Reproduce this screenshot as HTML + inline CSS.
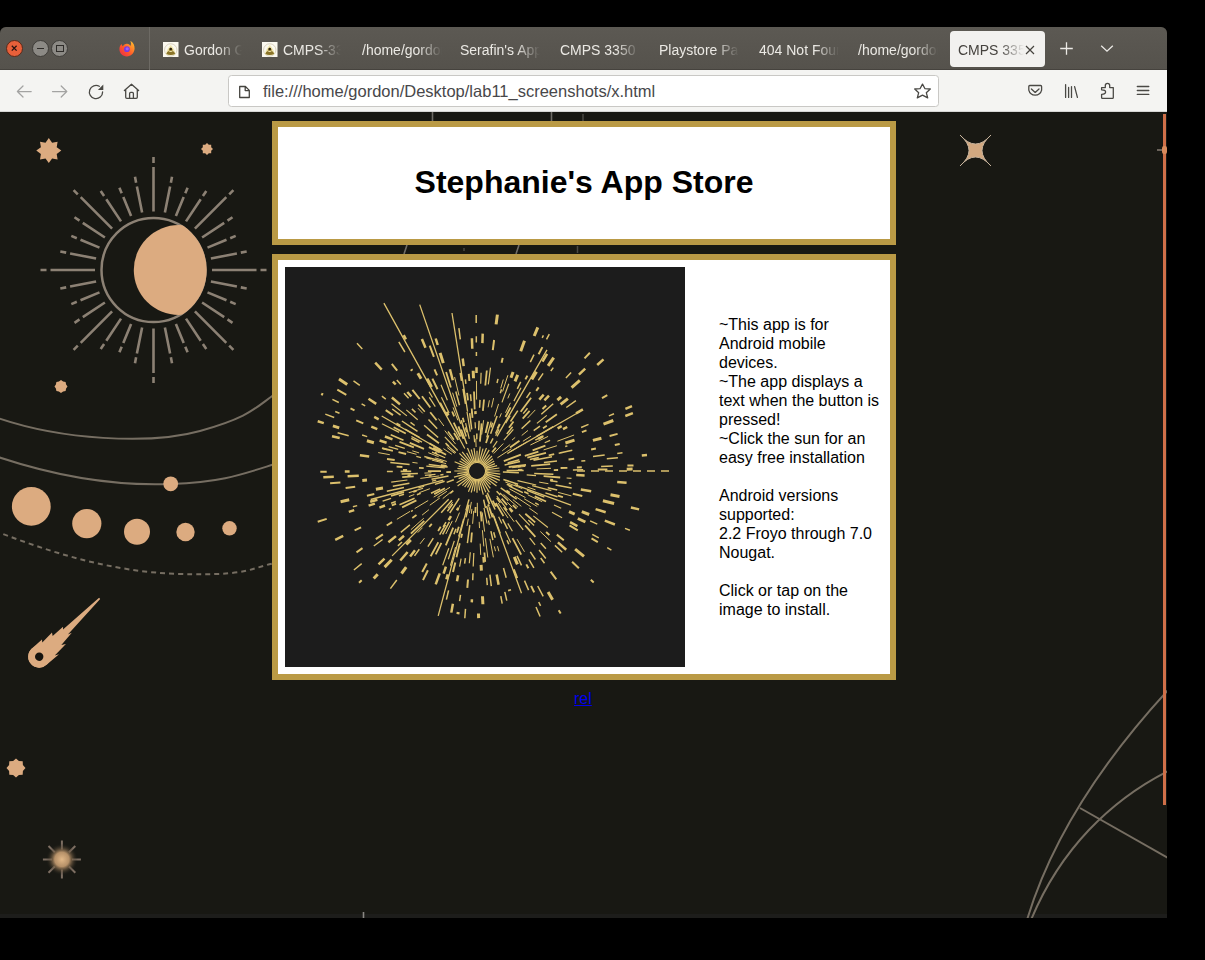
<!DOCTYPE html>
<html><head><meta charset="utf-8">
<style>
*{margin:0;padding:0;box-sizing:border-box}
html,body{width:1205px;height:960px;overflow:hidden;background:#000;font-family:"Liberation Sans",sans-serif}
#win{position:absolute;left:0;top:27px;width:1167px;height:891px;background:#181813;border-radius:6px 6px 0 0;overflow:hidden}
#tabs{position:absolute;left:0;top:0;width:1167px;height:43px;background:linear-gradient(#5c5953,#55524c);box-shadow:inset 0 -1px 0 #46433e}
#tb{position:absolute;left:0;top:43px;width:1167px;height:42px;background:#f4f4f2;border-bottom:1px solid #d6d6d4}
.wbtn{position:absolute;top:13px;width:17px;height:17px;border-radius:50%;border:1.2px solid}
.fav{position:absolute;top:14.7px;width:15.5px;height:15.5px;overflow:hidden}
.fav svg{display:block;width:15.5px;height:15.5px}
.tt{position:absolute;top:15px;height:19px;width:80px;font-size:14px;line-height:17px;color:#ebe9e4;white-space:nowrap;overflow:hidden;-webkit-mask-image:linear-gradient(90deg,#000 0,#000 calc(100% - 24px),transparent 100%)}
#atab{position:absolute;left:950px;top:4px;width:95px;height:36px;background:#f2f1ef;border-radius:4px}
.ic{position:absolute}
#url{position:absolute;left:228px;top:5px;width:711px;height:32px;background:#fff;border:1px solid #c9c8c5;border-radius:3.5px}
#urltxt{position:absolute;left:34px;top:6px;font-size:16.5px;line-height:19px;color:#48474a;white-space:nowrap}
#page{position:absolute;left:0;top:85px;width:1167px;height:806px;background:#181813;overflow:hidden}
.box{position:absolute;background:#fff;border:6px solid #ba9a45}
#hdr{left:272px;top:9px;width:624px;height:124px}
#hdr h1{position:absolute;left:0;right:0;top:37px;text-align:center;font-size:32px;font-weight:bold;line-height:37px;color:#000}
#main{left:272px;top:142px;width:624px;height:426px}
#img{position:absolute;left:7px;top:7px;width:400px;height:400px;background:#1c1c1c}
#txt{position:absolute;left:441px;top:55px;width:165px;font-size:16px;line-height:19px;color:#000}
#rel{position:absolute;left:574px;top:577px;font-size:16px;color:#0000ee;text-decoration:underline;line-height:19px}
</style></head><body>
<div id="win">
  <div id="tabs">
    <div class="wbtn" style="left:6px;background:#e8603a;border-color:#5a2a1a"><svg width="17" height="17" viewBox="0 0 17 17" style="position:absolute;left:-1px;top:-1px"><path d="M5.8 5.8L10.6 10.6M10.6 5.8L5.8 10.6" stroke="#2a1410" stroke-width="1.3"/></svg></div>
    <div class="wbtn" style="left:31.5px;background:#8c8a85;border-color:#3e3c38"><div style="position:absolute;left:4px;top:7px;width:7px;height:1.3px;background:#2e2c29"></div></div>
    <div class="wbtn" style="left:51px;background:#8c8a85;border-color:#3e3c38"><div style="position:absolute;left:3.5px;top:4px;width:8px;height:7px;border:1.2px solid #2e2c29"></div></div>
    <svg style="position:absolute;left:118px;top:12px" width="18" height="18" viewBox="118 39 18 18">
      <defs><linearGradient id="ffg" x1="0" y1="1" x2="1" y2="0"><stop offset="0" stop-color="#e8264a"/><stop offset="0.45" stop-color="#ff5a2a"/><stop offset="0.8" stop-color="#ffa02a"/><stop offset="1" stop-color="#ffe040"/></linearGradient></defs>
      <path d="M130.2 40.8C133.5 42.6 134.8 45.8 134.6 48.8C134.3 53.3 130.8 56.4 126.8 56.4C122.6 56.4 119.4 53.1 119.4 49C119.4 46.7 120.4 44.9 121.6 43.9C121.8 45 122.3 45.8 122.9 46.2C123.6 44.6 125.2 43.6 127 43.7C128.8 43.8 130.1 45 130.4 46.1C131.2 44.6 131.2 42.4 130.2 40.8Z" fill="url(#ffg)"/>
      <circle cx="126.9" cy="49.2" r="2.9" fill="#7a3ae0"/><circle cx="127.2" cy="48.8" r="1.6" fill="#a060f5"/>
    </svg>
    <div style="position:absolute;left:149px;top:0;width:1px;height:43px;background:#6d6a64"></div>
    <div class="fav" style="left:163px"><svg width="16" height="16" viewBox="0 0 16 16"><rect width="16" height="16" fill="#fbf9f0"/><circle cx="8" cy="8.2" r="6.4" fill="none" stroke="#d8d2bd" stroke-width="1"/><path d="M3.2 12.6Q3 8.4 8 2.8Q13 8.4 12.8 12.6Q8 14.6 3.2 12.6Z" fill="#f1e8b4"/><path d="M3.4 12.4Q4.2 9.6 5.8 9.2Q8 11.6 10.2 9.2Q11.8 9.6 12.6 12.4Q8 14.4 3.4 12.4Z" fill="#8a7428"/><path d="M5.6 8.4Q8 2.8 10.4 8.4Q8 10.4 5.6 8.4Z" fill="#a89040"/><circle cx="8" cy="7.2" r="1.3" fill="#2e2410"/></svg></div>
    <div class="tt" style="left:184px;width:58px">Gordon Gordon</div>
    <div class="fav" style="left:262px"><svg width="16" height="16" viewBox="0 0 16 16"><rect width="16" height="16" fill="#fbf9f0"/><circle cx="8" cy="8.2" r="6.4" fill="none" stroke="#d8d2bd" stroke-width="1"/><path d="M3.2 12.6Q3 8.4 8 2.8Q13 8.4 12.8 12.6Q8 14.6 3.2 12.6Z" fill="#f1e8b4"/><path d="M3.4 12.4Q4.2 9.6 5.8 9.2Q8 11.6 10.2 9.2Q11.8 9.6 12.6 12.4Q8 14.4 3.4 12.4Z" fill="#8a7428"/><path d="M5.6 8.4Q8 2.8 10.4 8.4Q8 10.4 5.6 8.4Z" fill="#a89040"/><circle cx="8" cy="7.2" r="1.3" fill="#2e2410"/></svg></div>
    <div class="tt" style="left:283px;width:58px">CMPS-3350</div>
    <div class="tt" style="left:362px">/home/gordon</div>
    <div class="tt" style="left:460px">Serafin's App</div>
    <div class="tt" style="left:560px">CMPS 3350 Lab</div>
    <div class="tt" style="left:659px">Playstore Page</div>
    <div class="tt" style="left:759px">404 Not Found</div>
    <div class="tt" style="left:858px">/home/gordon</div>
    <div id="atab"><div class="tt" style="left:8px;top:10.5px;width:66px;color:#45423e">CMPS 3350</div>
      <svg style="position:absolute;left:75px;top:14px" width="10" height="10" viewBox="0 0 10 10"><path d="M1 1L9 9M9 1L1 9" stroke="#45423e" stroke-width="1.15"/></svg></div>
    <svg style="position:absolute;left:1059px;top:14px" width="15" height="15" viewBox="0 0 15 15"><path d="M7.5 1.2V13.8M1.2 7.5H13.8" stroke="#ebe9e5" stroke-width="1.3"/></svg>
    <svg style="position:absolute;left:1100px;top:17px" width="14" height="10" viewBox="0 0 14 10"><path d="M1.2 1.8L7 7.2L12.8 1.8" stroke="#ebe9e5" stroke-width="1.35" fill="none"/></svg>
  </div>
  <div id="tb">
    <div id="url">
      <svg style="position:absolute;left:9px;top:9px" width="13" height="14" viewBox="0 0 13 14"><path d="M1.7 1.5H7.4L11.3 5.4V12.5H1.7Z M7.2 1.5V5.6H11.3" stroke="#45443f" stroke-width="1.3" fill="none" stroke-linejoin="round"/></svg>
      <div id="urltxt">file:///home/gordon/Desktop/lab11_screenshots/x.html</div>
    </div>
    <svg style="position:absolute;left:0;top:0" width="1167" height="42" viewBox="0 70 1167 42">
      <g fill="none" stroke="#a3a3a2" stroke-width="1.25" stroke-linecap="round" stroke-linejoin="round">
        <path d="M31.2 91.5H17.4M23 86L17.4 91.5L23 97"/>
        <path d="M52.5 91.5H66.8M61.2 86L66.8 91.5L61.2 97"/>
      </g>
      <g fill="none" stroke="#4a4945" stroke-width="1.3" stroke-linecap="round" stroke-linejoin="round">
        <path d="M102.6 92A6.6 6.6 0 1 1 99.3 86.3"/>
        <path d="M124.4 90.6L131.5 84.2L138.6 90.6M125.7 89.4V97.3Q125.7 98.4 126.8 98.4H136.2Q137.3 98.4 137.3 97.3V89.4M129.6 98.4V93.5Q129.6 92.4 130.7 92.4H132.3Q133.4 92.4 133.4 93.5V98.4"/>
        <path d="M922.5 84.1L925.0 88.7L930.3 89.0L926.3 92.7L927.7 97.9L922.5 95.1L917.3 97.9L918.7 92.7L914.7 89.0L920.0 88.7Z" stroke-linejoin="round"/>
        <path d="M1029.8 85.5H1040.6Q1041.6 85.5 1041.6 86.5V90.2A6.6 6.6 0 0 1 1028.8 90.2V86.5Q1028.8 85.5 1029.8 85.5Z"/>
        <path d="M1031.4 88.9L1035.2 92.4L1039 88.9"/>
        <path d="M1065.6 84.6V97.4M1068.6 87.4V97.4M1071.5 86.6V97.4M1074.6 86.6L1077.4 97.4"/>
        <path d="M1101.6 87.6H1105.3V85.6A2.2 2.2 0 0 1 1109.7 85.6V87.6H1113.3V97.4Q1113.3 98.3 1112.4 98.3H1102.5Q1101.6 98.3 1101.6 97.4V94.3Q1105.7 94.2 1105.6 92Q1105.7 89.9 1101.6 89.8Z"/>
        <path d="M1137.3 86.5H1148.8M1137.3 90.5H1148.8M1137.3 94.4H1148.8"/>
      </g>
      <path d="M97.9 89.9H103.3V84.5Z" fill="#4a4945"/>
    </svg>
  </div>
  <div id="page">
<svg id="bg" width="1167" height="806" viewBox="0 112 1167 806" style="position:absolute;left:0;top:0">
<rect x="0" y="914" width="1167" height="4" fill="#1d1d1b"/>
<path d="M260.5 270.0L266.5 270.0M212.0 270.0L256.5 270.0M240.8 287.4L246.7 288.5M210.9 281.4L236.9 286.6M230.2 301.8L235.7 304.1M207.5 292.4L226.5 300.2M227.5 319.4L232.5 322.8M202.1 302.5L224.2 317.2M229.2 345.7L233.4 349.9M194.9 311.4L226.3 342.8M202.9 344.0L206.3 349.0M186.0 318.6L200.7 340.7M185.3 346.7L187.6 352.2M175.9 324.0L183.7 343.0M170.9 357.3L172.0 363.2M164.9 327.4L170.1 353.4M153.5 377.0L153.5 383.0M153.5 328.5L153.5 373.0M136.1 357.3L135.0 363.2M142.1 327.4L136.9 353.4M121.7 346.7L119.4 352.2M131.1 324.0L123.3 343.0M104.1 344.0L100.7 349.0M121.0 318.6L106.3 340.7M77.8 345.7L73.6 349.9M112.1 311.4L80.7 342.8M79.5 319.4L74.5 322.8M104.9 302.5L82.8 317.2M76.8 301.8L71.3 304.1M99.5 292.4L80.5 300.2M66.2 287.4L60.3 288.5M96.1 281.4L70.1 286.6M46.5 270.0L40.5 270.0M95.0 270.0L50.5 270.0M66.2 252.6L60.3 251.5M96.1 258.6L70.1 253.4M76.8 238.2L71.3 235.9M99.5 247.6L80.5 239.8M79.5 220.6L74.5 217.2M104.9 237.5L82.8 222.8M77.8 194.3L73.6 190.1M112.1 228.6L80.7 197.2M104.1 196.0L100.7 191.0M121.0 221.4L106.3 199.3M121.7 193.3L119.4 187.8M131.1 216.0L123.3 197.0M136.1 182.7L135.0 176.8M142.1 212.6L136.9 186.6M153.5 163.0L153.5 157.0M153.5 211.5L153.5 167.0M170.9 182.7L172.0 176.8M164.9 212.6L170.1 186.6M185.3 193.3L187.6 187.8M175.9 216.0L183.7 197.0M202.9 196.0L206.3 191.0M186.0 221.4L200.7 199.3M229.2 194.3L233.4 190.1M194.9 228.6L226.3 197.2M227.5 220.6L232.5 217.2M202.1 237.5L224.2 222.8M230.2 238.2L235.7 235.9M207.5 247.6L226.5 239.8M240.8 252.6L246.7 251.5M210.9 258.6L236.9 253.4" stroke="#8c8174" stroke-width="2.6" stroke-linecap="butt"/>
<circle cx="153.5" cy="270" r="52" fill="none" stroke="#8c8174" stroke-width="2.5"/>
<defs><clipPath id="mc"><circle cx="153.5" cy="270" r="53.2"/></clipPath></defs>
<circle cx="178.8" cy="270" r="45" fill="#dcab80" clip-path="url(#mc)"/>
<polygon points="48.8,138.1 52.1,142.7 57.6,141.8 56.7,147.3 61.3,150.6 56.7,153.9 57.6,159.4 52.1,158.5 48.8,163.1 45.5,158.5 40.0,159.4 40.9,153.9 36.3,150.6 40.9,147.3 40.0,141.8 45.5,142.7" fill="#dcab80"/>
<polygon points="207.0,143.0 208.8,144.8 211.2,144.8 211.2,147.2 213.0,149.0 211.2,150.8 211.2,153.2 208.8,153.2 207.0,155.0 205.2,153.2 202.8,153.2 202.8,150.8 201.0,149.0 202.8,147.2 202.8,144.8 205.2,144.8" fill="#dcab80"/>
<polygon points="61.0,380.0 63.1,381.4 65.6,381.9 66.1,384.4 67.5,386.5 66.1,388.6 65.6,391.1 63.1,391.6 61.0,393.0 58.9,391.6 56.4,391.1 55.9,388.6 54.5,386.5 55.9,384.4 56.4,381.9 58.9,381.4" fill="#dcab80"/>
<polygon points="16.0,758.5 18.9,761.1 22.7,761.3 22.9,765.1 25.5,768.0 22.9,770.9 22.7,774.7 18.9,774.9 16.0,777.5 13.1,774.9 9.3,774.7 9.1,770.9 6.5,768.0 9.1,765.1 9.3,761.3 13.1,761.1" fill="#dcab80"/>
<path d="M-5 417 C60 440 150 445 200 431 S255 408 275 394" fill="none" stroke="#766e62" stroke-width="2"/>
<path d="M-5 456 C60 478 120 486 171 484 S240 475 275 464" fill="none" stroke="#766e62" stroke-width="2"/>
<path d="M-5 531 C50 552 110 572 180 574 S250 568 275 563" fill="none" stroke="#766e62" stroke-width="2" stroke-dasharray="5 4"/>
<circle cx="31.3" cy="506.4" r="19.4" fill="#dcab80"/>
<circle cx="86.8" cy="523.6" r="14.6" fill="#dcab80"/>
<circle cx="137" cy="531.7" r="13" fill="#dcab80"/>
<circle cx="185.5" cy="532" r="9.2" fill="#dcab80"/>
<circle cx="229.5" cy="528.3" r="7.2" fill="#dcab80"/>
<circle cx="170.7" cy="483.8" r="7.4" fill="#dcab80"/>
<g transform="translate(39.2 656.7) rotate(-44)"><path d="M0 -11 L14 -10.5 L12 -8 L26 -8.5 L24 -5.5 L38 -5 L36 -3 L84 -0.8 L84 0.8 L36 4 L40 5.5 L24 7 L28 9.5 L12 10 L16 12 L0 11 A11 11 0 0 1 0 -11Z" fill="#dcab80"/><circle cx="0" cy="0" r="11" fill="#dcab80"/><circle cx="0" cy="0" r="4.2" fill="#16140f"/></g>
<defs><radialGradient id="gl"><stop offset="0" stop-color="#e2b888"/><stop offset="0.45" stop-color="#b59068"/><stop offset="1" stop-color="#1a1914" stop-opacity="0"/></radialGradient></defs>
<path d="M71.9 859.4L80.9 859.4M69.0 866.5L75.3 872.8M61.9 869.4L61.9 878.4M54.8 866.5L48.5 872.8M51.9 859.4L42.9 859.4M54.8 852.3L48.5 846.0M61.9 849.4L61.9 840.4M69.0 852.3L75.3 846.0" stroke="#7d6e62" stroke-width="2"/>
<circle cx="61.9" cy="859.4" r="16" fill="url(#gl)"/>
<path d="M960 135 Q975.5 153 991 135 Q973 150.5 991 166 Q975.5 148 960 166 Q978 150.5 960 135Z" fill="#d2a880" stroke="#c9b59e" stroke-width="1"/>
<path d="M1027 920 C1045 860 1085 780 1170 688" fill="none" stroke="#766e62" stroke-width="2"/>
<path d="M1031 920 C1060 850 1110 800 1170 770" fill="none" stroke="#766e62" stroke-width="2"/>
<path d="M1080 808 L1170 859" fill="none" stroke="#766e62" stroke-width="2"/>
<path d="M432.5 112V121M551.5 112V121M404 254L407 245M516 254L519 245" stroke="#6f6c66" stroke-width="1.6"/>
<path d="M583 114V121M464 248V251M577.5 246V253" stroke="#4a4843" stroke-width="1.5"/>
<rect x="1163" y="114" width="3" height="691" fill="#cf6f48"/>
<rect x="1157" y="149" width="6" height="2" fill="#6a625a"/><rect x="1162" y="146" width="5" height="8" rx="2" fill="#d88a5c"/>
<path d="M363.5 912V918" stroke="#8a8884" stroke-width="1.6"/>
</svg>
    <div class="box" id="hdr"><h1>Stephanie's App Store</h1></div>
    <div class="box" id="main">
      <div id="img"><svg width="400" height="400" viewBox="0 0 400 400" style="position:absolute;left:0;top:0">
<path d="M201.0 204.0L214.7 204.0M200.9 205.2L215.3 207.1M200.7 206.3L215.0 210.2M200.3 207.4L214.8 213.4M199.8 208.5L212.3 215.7M199.1 209.5L211.5 218.9M198.4 210.4L205.6 217.6M197.5 211.1L205.3 221.3M196.5 211.8L204.3 225.4M195.4 212.3L200.8 225.2M194.3 212.7L198.3 227.6M193.2 212.9L194.6 223.5M192.0 213.0L192.0 225.8M190.8 212.9L189.3 224.3M189.7 212.7L186.2 225.5M188.6 212.3L183.4 224.7M187.5 211.8L182.5 220.5M186.5 211.1L179.6 220.1M185.6 210.4L177.4 218.6M184.9 209.5L172.6 218.9M184.2 208.5L171.6 215.8M183.7 207.4L173.6 211.6M183.3 206.3L169.0 210.2M183.1 205.2L172.3 206.6M183.0 204.0L169.3 204.0M183.1 202.8L172.4 201.4M183.3 201.7L173.6 199.1M183.7 200.6L169.6 194.7M184.2 199.5L174.5 193.9M184.9 198.5L175.9 191.6M185.6 197.6L174.4 186.4M186.5 196.9L177.2 184.8M187.5 196.2L181.6 186.0M188.6 195.7L182.5 181.1M189.7 195.3L186.2 182.5M190.8 195.1L189.0 181.1M192.0 195.0L192.0 183.8M193.2 195.1L195.2 179.6M194.3 195.3L198.0 181.6M195.4 195.7L201.5 181.1M196.5 196.2L204.2 182.9M197.5 196.9L204.7 187.5M198.4 197.6L207.0 189.0M199.1 198.5L207.9 191.8M199.8 199.5L209.2 194.1M200.3 200.6L209.9 196.6M200.7 201.7L212.1 198.6M200.9 202.8L214.4 201.0M241.7 207.9L251.0 208.6M281.6 211.0L286.5 211.4M232.5 213.6L251.2 218.0M247.2 218.6L266.3 223.6M269.0 238.0L276.2 241.2M267.0 245.2L277.1 250.7M248.3 248.9L262.9 260.5M214.9 225.9L223.2 233.8M243.3 253.0L249.1 258.5M234.0 247.2L244.8 258.3M211.8 229.2L220.6 240.4M230.7 253.2L238.2 262.8M244.6 270.8L250.1 277.9M222.8 256.4L227.4 264.3M213.6 249.8L216.8 256.5M220.4 264.3L225.6 275.4M208.8 248.8L215.4 266.4M203.4 253.5L204.4 257.9M199.0 241.0L202.0 256.5M188.8 286.0L188.2 299.5M185.3 285.2L184.3 296.2M176.1 291.6L174.6 299.7M178.6 251.8L173.6 269.5M170.6 280.2L165.5 298.6M169.3 273.9L163.3 292.2M163.8 281.3L157.7 298.2M138.1 221.2L123.8 225.8M139.2 219.2L133.3 221.0M151.2 213.2L147.0 214.1M122.4 213.0L106.2 215.2M150.5 207.4L139.9 208.3M159.8 200.9L141.3 199.1M136.0 190.6L131.3 189.4M113.2 182.3L103.6 179.7M119.8 181.4L110.2 178.4M160.2 190.7L147.0 185.1M114.2 165.4L96.9 156.8M137.0 175.1L126.4 169.5M121.9 148.9L106.5 136.7M170.8 185.7L161.2 177.4M132.7 152.8L121.3 142.9M172.8 183.5L159.8 169.8M150.3 139.6L144.3 130.3M147.5 130.5L144.0 124.7M179.8 181.5L170.4 164.0M164.1 146.1L156.4 130.3M162.4 133.2L156.0 117.7M184.3 171.8L180.6 156.2M185.3 164.6L182.0 144.9M189.6 175.3L189.0 168.1M190.4 161.4L190.1 155.2M195.7 116.7L196.1 105.8M203.3 117.4L205.5 100.6M201.7 170.3L206.2 154.5M217.0 135.4L223.8 116.8M210.4 166.5L212.7 161.7M210.6 168.8L214.0 162.4M228.9 134.1L236.0 120.7M220.7 156.1L225.2 148.6M207.9 180.5L212.2 174.1M218.9 173.2L228.4 162.3M251.9 156.4L261.8 148.4M259.7 175.7L265.1 173.4" stroke="#dcc06c" stroke-width="1.2"/>
<path d="M221.6 203.6L238.7 203.4M287.9 202.9L298.2 202.7M217.9 205.1L233.9 205.7M249.2 206.4L268.4 207.2M265.6 213.8L272.5 214.7M283.8 216.2L286.2 216.5M270.6 218.0L286.7 220.9M262.7 220.7L272.2 223.0M218.4 212.5L233.1 217.2M260.4 225.9L272.5 229.8M242.0 223.4L259.4 230.1M340.0 261.4L344.9 263.3M305.1 253.9L312.3 257.1M223.7 218.9L237.9 225.6M250.2 235.9L253.7 237.9M307.3 267.3L313.8 270.8M322.2 280.6L326.4 283.1M215.7 220.9L231.7 232.2M269.9 278.4L277.2 285.3M211.6 224.2L215.3 228.0M255.7 275.9L260.9 281.7M254.1 283.0L260.8 291.5M211.7 231.0L215.3 235.9M255.7 291.0L259.5 296.3M245.3 284.8L250.4 292.5M243.9 292.3L248.9 300.9M217.5 252.2L222.6 261.9M252.7 319.0L258.2 329.4M202.2 225.7L210.1 242.5M232.0 288.9L236.5 298.4M253.7 335.0L255.6 338.9M222.0 273.3L223.8 277.3M239.5 313.6L243.6 323.1M251.0 340.0L255.1 349.5M201.6 239.1L205.0 251.5M208.7 265.3L210.2 270.7M218.5 301.0L221.2 310.8M198.6 232.7L200.5 241.0M205.9 264.2L207.9 273.2M219.8 324.9L221.8 333.6M215.8 329.1L217.2 336.6M204.9 307.7L206.3 319.1M201.7 310.8L202.3 318.1M188.0 306.3L187.7 313.2M180.5 341.9L179.8 351.2M184.8 258.2L182.4 276.2M180.4 291.1L179.6 296.7M175.5 327.8L174.6 334.1M184.0 237.7L181.0 250.4M163.6 323.4L161.4 332.7M184.0 232.4L181.0 243.2M171.0 261.7L168.9 267.2M164.4 254.9L157.6 267.4M160.6 257.6L154.7 267.7M174.2 231.4L164.7 246.0M148.3 271.2L142.9 279.6M167.7 237.0L162.4 244.3M134.3 282.3L129.5 288.9M111.8 313.0L105.4 321.6M167.0 233.2L156.2 245.8M117.0 275.0L112.9 278.9M124.9 257.9L115.8 265.3M76.7 296.7L68.9 303.0M97.6 272.5L88.8 279.0M155.2 221.9L146.0 226.3M129.6 231.2L114.5 237.8M106.2 241.4L103.8 242.5M168.8 212.7L161.7 215.4M110.8 234.5L106.1 236.3M159.6 214.3L149.9 217.4M119.0 227.3L113.9 228.9M106.1 231.4L97.6 234.1M72.2 238.6L67.9 239.8M119.0 220.4L101.8 224.3M163.5 209.1L146.5 212.2M124.4 216.2L107.8 219.2M132.9 206.4L116.6 207.0M107.8 204.4L101.9 204.4M124.6 197.4L105.3 195.5M162.7 200.1L143.7 197.5M158.3 194.7L139.3 189.5M63.7 168.7L52.6 165.7M82.2 169.6L77.1 168.0M49.2 150.5L40.3 147.1M118.5 173.2L105.7 167.8M54.5 146.3L50.2 144.5M134.5 175.5L126.3 171.4M53.8 135.5L47.4 132.3M134.8 170.7L120.1 162.1M80.2 138.9L76.6 136.8M132.5 164.4L116.9 154.0M129.7 158.5L125.5 155.4M115.6 148.2L107.2 142.0M74.8 118.4L68.5 113.8M100.8 132.2L96.9 129.1M153.2 170.5L139.1 158.3M130.5 145.4L126.9 141.9M152.2 161.7L143.5 152.4M123.6 131.2L119.0 126.3M77.3 81.9L72.0 76.3M139.8 144.8L133.3 137.5M115.8 117.6L111.8 113.1M169.0 172.7L163.0 164.5M119.9 85.0L113.8 74.9M181.8 177.1L176.3 162.4M181.2 169.5L176.2 153.3M174.5 138.3L170.8 124.5M186.7 162.4L184.7 146.2M180.9 116.8L180.4 112.3M175.3 72.3L173.9 61.1M186.1 134.1L185.5 127.3M191.8 172.2L191.8 166.6M191.4 89.0L191.4 84.9M191.3 75.4L191.3 69.3M191.2 56.0L191.2 47.9M193.7 163.4L194.1 153.8M194.6 140.8L195.0 132.9M212.0 116.0L213.0 111.8M206.0 160.4L207.6 155.7M205.6 166.8L212.1 148.9M205.4 176.5L208.0 171.4M232.3 121.8L235.7 114.9M245.3 95.1L249.0 87.6M257.2 70.8L258.4 68.4M261.5 72.3L264.3 67.1M225.5 154.5L232.8 143.7M241.5 130.9L245.4 125.1M253.3 113.4L258.1 106.4M265.8 104.0L268.3 100.6M221.8 167.0L227.6 159.8M238.2 146.6L242.5 141.3M280.9 110.9L286.1 105.4M236.6 161.8L245.4 153.5M256.3 147.3L268.2 136.8M248.7 163.7L255.0 159.2M281.3 140.5L290.9 133.7M251.6 169.3L268.2 159.6M250.3 173.2L258.6 168.8M296.1 160.5L303.5 157.4M323.9 148.9L329.0 146.7M222.6 195.9L234.3 192.8M219.6 198.0L235.1 194.6M244.8 192.5L253.8 190.5M274.6 186.0L287.3 183.2M248.5 193.3L267.0 189.8M258.9 195.6L272.0 193.9M308.0 189.4L319.7 187.9M332.2 186.4L337.5 185.7M296.3 194.1L300.3 193.8M321.8 191.7L332.9 190.7M316.1 199.6L327.8 199.1M125.6 208.3L122.5 208.5M186.9 146.5L186.7 144.4M102.6 182.7L97.9 181.6M161.0 255.1L158.1 259.8M273.7 186.3L277.5 185.5M146.4 192.0L141.4 190.7M146.5 208.7L143.7 209.0M181.4 163.5L180.7 160.9M163.9 179.2L160.5 176.1M215.3 126.3L216.5 122.2M168.4 223.7L165.2 226.4M158.5 207.6L155.3 208.0M135.7 226.3L131.9 227.8M127.8 243.3L126.0 244.5M280.2 179.5L282.4 178.9" stroke="#dcc06c" stroke-width="1.5"/>
<path d="M268.8 203.1L273.1 203.0M258.6 209.2L275.2 210.5M221.8 217.2L227.3 219.6M239.2 224.8L243.5 226.7M249.7 229.4L261.1 234.5M221.4 223.5L224.8 225.8M240.3 246.7L250.2 255.4M227.8 238.2L231.5 241.7M216.6 231.7L222.1 238.0M240.1 258.3L250.4 269.9M210.8 236.0L218.5 249.1M207.7 233.7L210.8 239.6M227.5 271.2L236.2 287.7M201.0 227.9L204.4 237.0M204.1 240.2L207.6 250.4M195.7 244.4L196.6 254.4M199.4 285.5L200.2 294.9M190.6 240.0L190.3 245.9M186.9 265.5L186.1 275.4M177.1 266.7L176.1 270.8M174.8 276.2L171.5 290.2M173.8 259.8L171.9 265.8M168.2 260.7L160.8 278.3M156.4 275.9L150.7 287.4M153.3 275.3L145.7 289.3M155.7 259.8L153.1 263.9M146.8 256.8L144.2 259.8M139.3 253.9L125.9 266.6M131.5 247.9L127.3 250.9M159.9 221.3L149.2 227.1M131.4 233.4L117.1 240.4M119.0 225.1L106.0 228.8M128.7 209.3L117.2 210.2M166.0 205.0L161.3 205.2M156.0 204.2L142.9 204.2M126.2 204.3L115.6 204.4M138.7 201.1L134.0 200.9M117.4 200.0L111.6 199.7M109.7 193.0L102.0 192.0M121.1 187.0L113.5 185.2M107.9 183.8L97.0 181.2M128.9 180.4L114.5 174.9M139.0 181.8L124.8 175.8M154.6 185.4L143.9 180.1M161.1 187.8L148.1 180.9M120.8 166.5L108.6 160.2M155.9 183.0L144.3 176.2M154.0 176.2L142.0 167.5M151.6 153.2L145.2 145.2M145.3 140.5L137.0 129.2M173.2 173.0L169.0 166.0M162.3 149.1L155.1 135.7M175.5 169.7L168.7 155.7M178.5 171.8L173.4 159.4M169.2 149.4L167.1 144.5M165.9 120.5L161.1 105.0M179.0 155.2L177.8 150.7M180.6 136.8L178.1 121.8M183.0 133.4L182.1 125.9M187.5 150.8L186.7 141.5M189.7 142.4L189.0 124.5M194.9 174.7L196.6 156.3M197.9 143.8L199.0 132.5M200.3 118.5L201.8 103.5M200.6 166.0L203.2 154.7M201.0 176.1L203.5 168.3M220.5 150.0L225.6 140.4M224.0 160.7L228.5 154.5M235.7 144.8L246.1 130.7M207.1 185.2L210.9 180.6M237.7 151.6L244.6 143.8M225.0 180.5L234.5 173.8M260.7 155.2L271.9 147.2M258.0 161.3L261.8 158.8M218.8 194.1L235.9 187.7M247.6 183.4L260.4 178.7M239.8 188.9L253.4 184.6M242.3 190.7L261.0 185.8M263.7 188.3L269.2 187.1M223.7 200.0L241.0 197.8M246.2 198.9L265.2 197.1M275.6 201.0L282.4 200.8" stroke="#dcc06c" stroke-width="1.8"/>
<path d="M312.8 202.6L322.4 202.4M287.8 226.7L297.3 229.0M284.5 258.4L292.8 263.3M306.5 271.4L312.8 275.1M271.8 267.6L278.8 273.2M261.1 265.1L264.4 267.9M287.1 294.8L293.9 301.3M305.8 312.7L308.7 315.4M265.6 304.6L271.3 312.3M273.7 343.2L275.7 346.5M241.3 297.4L243.4 301.3M246.1 318.9L249.2 325.4M228.8 302.3L232.2 311.2M183.0 312.5L182.3 320.8M170.3 295.4L168.0 304.9M142.9 303.2L138.0 313.1M141.8 296.6L137.2 305.1M76.7 313.2L74.0 315.8M97.9 267.4L90.8 272.2M77.5 281.2L71.5 285.3M107.1 255.2L101.7 258.5M76.1 260.3L69.6 263.4M41.7 251.9L32.7 254.8M89.3 227.1L81.9 228.7M70.2 219.8L60.6 221.1M55.4 215.4L45.1 216.2M41.7 204.7L35.3 204.8M78.3 156.3L71.2 153.3M69.5 143.3L65.5 141.3M61.3 127.9L52.3 122.7M108.0 148.1L100.7 143.2M134.7 132.0L127.4 122.8M112.2 103.6L106.8 96.9M152.5 122.2L147.4 111.6M152.1 108.4L149.5 102.4M148.9 89.8L144.7 78.6M176.7 113.8L175.4 105.8M184.4 114.0L183.8 106.8M207.8 83.2L209.1 73.0M216.6 95.8L217.7 90.9M240.4 112.4L242.4 108.6M253.6 87.3L257.4 80.1M251.2 123.8L253.7 120.4M299.5 91.4L304.9 85.7M257.5 142.1L261.2 138.6M317.0 131.2L322.3 128.2M296.9 165.1L301.5 163.4M324.6 169.0L332.6 166.9M306.1 182.5L310.9 181.5M329.8 178.0L334.7 177.0M283.5 192.5L289.2 191.8M291.9 200.4L296.8 200.2M342.4 198.6L348.5 198.4M233.0 199.5L236.0 199.1M131.5 223.8L128.2 224.9M152.1 186.7L149.7 185.7M212.5 161.8L214.8 157.0M111.0 236.7L106.8 238.4M272.8 228.6L277.9 230.1M198.3 290.0L198.7 295.6M203.1 237.4L203.9 239.7" stroke="#dcc06c" stroke-width="2"/>
<path d="M341.7 202.2L347.6 202.1M325.5 227.8L334.5 229.4M317.9 233.8L329.1 236.5M296.8 244.7L304.2 247.5M284.0 244.6L289.7 247.1M292.8 251.5L300.4 255.0M290.1 282.1L299.0 289.3M263.1 325.0L267.6 332.7M229.3 289.9L232.4 297.3M224.3 322.4L224.8 324.0M196.1 297.9L196.4 303.6M197.5 329.2L197.9 337.3M193.5 346.5L193.6 351.1M173.2 345.0L172.9 347.2M163.0 307.3L161.6 312.3M121.2 300.1L116.5 306.5M125.8 272.9L121.3 277.5M106.7 292.7L99.6 300.1M92.7 307.3L88.7 311.5M64.2 232.7L55.6 234.7M98.0 221.0L90.9 222.2M82.0 213.1L77.3 213.5M88.9 175.7L81.9 173.7M54.2 160.9L47.9 158.9M62.2 117.6L54.0 112.1M136.1 111.7L132.8 106.3M146.6 120.0L142.1 111.6M158.3 96.1L155.1 85.9M188.5 111.3L188.2 103.8M211.1 57.4L212.4 47.6M226.0 110.8L228.1 104.9M235.7 84.2L239.5 73.8M230.0 114.3L232.7 107.9M249.2 69.0L252.8 60.4M246.8 112.4L251.5 104.7M263.1 98.9L268.7 90.6M272.4 133.1L276.1 129.9M286.6 120.6L294.8 113.4M275.6 137.4L282.9 131.6M318.5 157.1L328.3 153.5M280.4 176.0L289.5 173.1M307.9 173.4L316.4 171.2" stroke="#dcc06c" stroke-width="3"/>
<path d="M291.2 208.1L299.6 208.5M332.2 215.0L341.6 215.8M295.8 222.5L306.2 224.3M345.9 240.5L354.1 242.4M310.6 242.1L320.7 245.3M319.8 253.6L329.9 257.5M285.1 255.1L292.4 259.1M272.9 275.4L281.2 282.8M211.7 307.4L213.6 317.7M186.9 332.3L186.8 335.4M173.1 308.2L172.0 314.2M167.9 336.7L166.3 345.6M160.9 299.6L158.6 306.6M154.7 306.3L150.7 317.4M130.0 283.2L125.1 289.5M122.6 285.0L115.3 293.5M99.5 291.6L93.5 297.3M119.0 268.8L113.8 273.4M111.0 269.1L103.4 275.3M58.2 268.9L50.2 272.8M100.0 238.5L94.4 240.6M89.9 236.6L83.6 238.6M69.2 243.1L63.8 244.9M92.4 232.8L85.2 234.8M73.8 208.7L62.6 209.2M48.8 209.7L38.3 210.2M64.6 204.6L59.8 204.6M84.2 189.6L74.9 188.3M54.7 171.0L47.0 169.2M101.6 175.7L94.6 173.5M38.8 156.1L32.7 154.2M107.5 172.3L99.9 169.5M92.3 162.2L86.3 159.7M38.1 127.7L36.2 126.8M93.7 152.3L89.2 149.9M91.2 136.9L83.5 131.7M115.0 137.4L106.9 130.5M110.7 117.5L107.9 114.6M96.7 102.6L90.2 95.7M126.3 129.5L122.3 125.0M127.1 103.7L126.2 102.3M120.9 72.3L118.7 68.2M140.5 80.8L136.9 72.1M152.7 78.0L150.7 71.5M167.8 113.2L164.9 102.3M178.7 99.1L177.7 91.5M187.3 81.8L186.9 71.2M191.5 106.1L191.5 100.2M197.4 76.1L197.7 66.6M257.5 94.6L262.1 86.9M254.3 132.7L258.7 127.7M259.4 133.4L264.0 128.6M293.9 107.6L300.2 101.7M312.2 98.0L318.5 92.4M291.0 146.4L297.9 142.4M272.6 161.4L276.7 159.2M278.0 162.1L282.2 160.0M340.4 141.9L347.0 139.2M340.3 149.0L347.9 146.2M356.8 188.4L362.0 187.9M190.5 147.1L190.4 144.1M163.4 148.4L161.5 144.8M253.2 171.9L257.9 169.4M225.3 242.3L227.5 244.8M122.1 203.3L118.0 203.3M173.3 240.8L172.0 243.3M219.5 240.4L221.8 243.4M161.6 199.3L155.8 198.4M265.1 212.9L268.0 213.3M166.0 249.1L163.6 253.2M115.2 158.9L111.3 156.7M224.4 241.0L227.6 244.8" stroke="#dcc06c" stroke-width="2.5"/>
<path d="M254.1 215.1L263.4 216.7M273.2 225.4L286.4 228.9M242.5 220.2L250.5 222.8M220.3 215.0L237.3 221.6M242.8 227.9L257.2 234.7M224.4 221.8L240.5 230.6M239.2 231.8L252.3 239.5M230.0 229.2L245.8 239.7M244.3 241.2L252.7 247.1M227.8 232.6L236.3 239.3M218.5 227.4L233.0 240.2M255.3 264.5L266.0 274.7M222.4 235.3L227.2 240.3M218.4 240.1L229.2 254.8M213.1 236.0L223.1 251.1M232.0 272.1L239.5 284.8M212.5 279.2L213.9 284.3M209.3 279.4L210.5 284.2M204.9 271.8L208.4 290.3M197.2 245.3L199.6 264.6M200.4 271.2L202.8 290.5M197.4 263.2L198.8 279.4M194.2 254.8L194.5 261.1M195.2 276.6L195.7 287.9M192.3 235.8L192.5 249.3M188.7 243.9L187.6 256.8M186.9 241.9L186.3 246.8M186.4 234.9L184.4 246.0M183.3 251.7L182.0 258.9M174.5 245.6L170.4 255.3M175.2 237.9L172.6 243.1M167.3 253.9L160.8 267.0M167.7 235.0L162.9 241.1M139.5 271.1L135.0 276.9M137.5 260.7L132.8 265.6M138.8 251.2L125.9 262.7M167.8 223.5L157.7 231.6M143.9 242.7L137.1 248.1M154.8 231.0L144.8 238.2M161.9 224.3L152.5 230.6M165.0 220.3L148.7 230.1M143.2 233.5L129.7 241.6M125.0 244.4L111.9 252.3M144.9 221.7L134.4 225.6M129.3 227.5L123.9 229.6M154.4 208.9L135.3 211.4M146.4 205.8L139.4 206.1M132.6 196.1L127.4 195.4M104.8 187.7L93.2 185.6M161.1 196.6L146.8 193.1M131.5 187.3L121.9 184.7M161.8 194.5L149.9 190.8M134.1 185.9L127.3 183.8M153.6 189.6L143.3 185.7M166.9 187.3L158.4 181.6M169.8 186.5L162.2 180.6M137.8 146.4L132.9 141.1M170.6 177.1L159.8 163.6M158.9 159.0L153.4 151.5M172.9 153.4L168.0 140.4M171.9 139.7L167.6 125.7M181.7 165.4L180.4 160.3M174.0 128.5L169.6 110.0M191.1 180.0L190.8 171.7M191.6 132.6L191.5 113.9M196.7 167.6L198.6 153.2M203.1 140.3L204.4 133.3M206.5 140.4L208.6 131.1M215.7 121.4L218.3 112.5M209.6 149.5L213.6 136.9M217.6 124.5L222.9 108.2M214.6 150.6L216.4 146.3M222.8 131.4L224.8 126.5M220.5 145.8L225.4 135.8M208.7 186.5L218.3 176.5M242.4 151.2L250.3 142.9M227.0 173.1L230.2 170.4M217.2 183.9L225.2 177.5M236.7 168.5L243.0 163.4M212.4 190.8L226.4 181.7M237.9 174.3L246.0 169.1M225.9 184.3L242.1 174.8M245.4 178.0L263.1 169.4M272.4 174.2L289.1 168.0M258.6 182.9L271.9 178.7M227.1 200.7L240.4 199.4M233.0 202.5L237.4 202.4M251.6 201.9L266.0 201.3" stroke="#dcc06c" stroke-width="1"/>
<path d="M170.2 164.6L98.9 36.1M175.7 156.7L134.7 37.6M182.6 144.7L167.0 46.0M212.0 169.4L262.0 82.8M222.3 186.5L295.9 144.0M158.2 213.1L85.7 232.5M181.6 242.6L153.2 348.9M207.4 246.3L236.5 326.2M229.6 217.7L286.0 238.2M157.4 184.0L96.7 149.0M163.7 232.3L107.1 288.9" stroke="#dcc06c" stroke-width="1.3"/>
<path d="M292.0 204.0L300.0 204.0M306.0 204.0L314.0 204.0M320.0 204.0L328.0 204.0M334.0 204.0L342.0 204.0M348.0 204.0L356.0 204.0M362.0 204.0L370.0 204.0M376.0 204.0L384.0 204.0" stroke="#dcc06c" stroke-width="1.6"/>
<circle cx="192" cy="204" r="8.6" fill="none" stroke="#dcc06c" stroke-width="1.3"/>
<circle cx="192" cy="204" r="7.6" fill="#1b1b1b"/>
</svg></div>
      <div id="txt">~This app is for Android mobile devices.<br>~The app displays a text when the button is pressed!<br>~Click the sun for an easy free installation<br><br>Android versions supported:<br>2.2 Froyo through 7.0 Nougat.<br><br>Click or tap on the image to install.</div>
    </div>
    <div id="rel">rel</div>
  </div>
</div>
</body></html>
